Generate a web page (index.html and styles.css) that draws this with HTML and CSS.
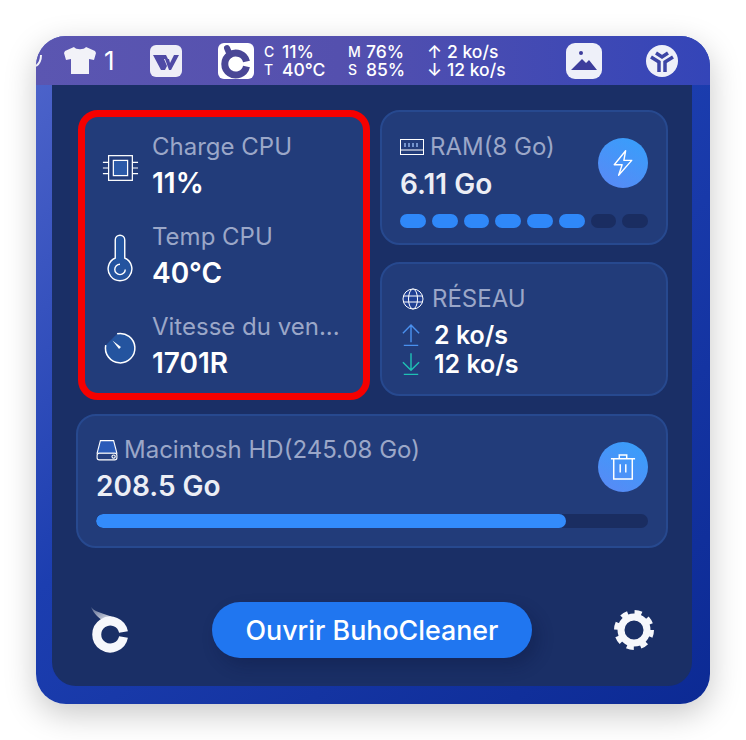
FILE: index.html
```html
<!DOCTYPE html>
<html lang="fr">
<head>
  <meta charset="UTF-8" />
  <meta name="viewport" content="width=device-width, initial-scale=1.0" />
  <title>BuhoCleaner</title>
  <link rel="stylesheet" href="styles.css">
</head>
<body>
  <div class="window">
    <div class="menubar">
      <svg class="menu-cut" viewBox="0 0 6 16" fill="none" stroke="#f2f2f8" stroke-width="2"><path d="M5 2 C5 7 3 11 0 13"/></svg>
      <svg class="menu-shirt" viewBox="0 0 32 28"><path d="M10 0 L1 4 L0 6 L2 13 L7 12 L7 27 L25 27 L25 12 L30 13 L32 6 L31 4 L22 0 C20 3 12 3 10 0 Z" fill="#f2f2f8"/></svg>
      <span class="menu-one">1</span>
      <div class="menu-wps">
        <svg viewBox="0 0 32 32" fill="#4f4aa6"><path d="M3 10 L16 10 L18 14 L14 14 L17 21 L15 25 L11 25 Z"/><path d="M15 14 L19 14 L20 18 L24 10 L29 10 L21 25 L19 25 Z"/></svg>
      </div>
      <div class="menu-buho">
        <svg viewBox="0 0 36 36" fill="none" stroke="#4a4796"><path d="M28.500 18.500 A11 11 0 1 0 28.500 23.500" stroke-width="7"/><path d="M9 5 L12 12" stroke-width="6" stroke-linecap="round"/></svg>
      </div>
      <div class="menu-stat menu-cpu">
        <div class="menu-line"><span class="menu-key">C</span><span>11%</span></div>
        <div class="menu-line"><span class="menu-key">T</span><span>40°C</span></div>
      </div>
      <div class="menu-stat menu-mem">
        <div class="menu-line"><span class="menu-key">M</span><span>76%</span></div>
        <div class="menu-line"><span class="menu-key">S</span><span>85%</span></div>
      </div>
      <div class="menu-stat menu-net">
        <div class="menu-line"><span class="menu-arrow">↑</span><span>2 ko/s</span></div>
        <div class="menu-line"><span class="menu-arrow">↓</span><span>12 ko/s</span></div>
      </div>
      <div class="menu-photo">
        <svg viewBox="0 0 36 36"><circle cx="15" cy="10" r="2" fill="#3d3d9c"/><path d="M5 27 L16 16 L20 20 L23 17 L31 27 Z" fill="#3d3d9c"/></svg>
      </div>
      <div class="menu-round">
        <svg viewBox="0 0 32 32" fill="none" stroke="#3c45a6" stroke-width="3.500"><path d="M5 12 L13 17 L13 27"/><path d="M27 12 L19 17 L19 27"/><path d="M10 8 L16 12 L22 8"/></svg>
      </div>
    </div>

    <div class="panel">
      <div class="grid">
        <div class="card cpu">
          <div class="cpu-row">
            <svg class="cpu-icon" viewBox="0 0 40 40" fill="none" stroke="#fff" stroke-width="1.300">
              <rect x="8" y="7" width="25" height="26"/>
              <rect x="13" y="12" width="15" height="16" fill="#2c5aa8"/>
              <path d="M2 14H8M2 20H8M2 26H8M33 14H39M33 20H39M33 26H39"/>
            </svg>
            <div>
              <div class="label">Charge CPU</div>
              <div class="value">11%</div>
            </div>
          </div>
          <div class="cpu-row">
            <svg class="cpu-icon" viewBox="0 0 40 52" fill="none" stroke="#fff" stroke-width="1.500">
              <path d="M15 26 V7 A5 5 0 0 1 25 7 V26 A12.500 12.500 0 1 1 15 26 Z" fill="#24549f"/>
              <path d="M25.500 38 A5.500 5.500 0 1 1 20 32.500"/>
            </svg>
            <div>
              <div class="label">Temp CPU</div>
              <div class="value">40°C</div>
            </div>
          </div>
          <div class="cpu-row">
            <svg class="cpu-icon" viewBox="0 0 40 40" fill="none" stroke="#fff" stroke-width="1.600">
              <path d="M17 5 A15.500 15.500 0 1 1 5 17" fill="#24549f"/>
              <path d="M12 12 L21 19 L19 21 Z" fill="#fff" stroke="none"/>
            </svg>
            <div>
              <div class="label">Vitesse du ven...</div>
              <div class="value">1701R</div>
            </div>
          </div>
        </div>

        <div class="card ram">
          <div>
            <div class="label-row">
              <svg class="ram-icon" viewBox="0 0 24 16" fill="none" stroke="#fff"><rect x="0.500" y="0.500" width="23" height="15"/><path d="M0.500 11H23.500"/><path d="M5 4V8M9 4V8M13 4V8M17 4V8" stroke="#8fb0e8" stroke-width="1.500"/></svg>
              <span class="label">RAM(8 Go)</span>
            </div>
            <div class="value soft">6.11 Go</div>
          </div>
          <div class="action">
            <svg viewBox="0 0 28 32" fill="none" stroke="#fff" stroke-width="1.600" stroke-linejoin="round"><path d="M17 2 L4 18 L13 18 L9 30 L24 13 L15 13 Z"/></svg>
          </div>
          <div class="pills">
            <span class="pill on"></span><span class="pill on"></span><span class="pill on"></span><span class="pill on"></span><span class="pill on"></span><span class="pill on"></span><span class="pill"></span><span class="pill"></span>
          </div>
        </div>

        <div class="card net">
          <div class="label-row net-label">
            <svg class="globe" viewBox="0 0 22 22" fill="#1f3f94" stroke="#fff" stroke-width="1"><circle cx="11" cy="11" r="10"/><ellipse cx="11" cy="11" rx="4.500" ry="10"/><path d="M1.500 8H20.500M1.500 14H20.500"/></svg>
            <span class="label">RÉSEAU</span>
          </div>
          <div class="net-rows">
            <div class="net-row">
              <svg class="net-icon" viewBox="0 0 20 26" fill="none" stroke="#4a90ee" stroke-width="1.600"><path d="M1 11 L10 2 L19 11M10 2V21M2 24.500H18"/></svg>
              <span class="net-value">2 ko/s</span>
            </div>
            <div class="net-row">
              <svg class="net-icon" viewBox="0 0 20 26" fill="none" stroke="#1fc0b4" stroke-width="1.600"><path d="M1 11 L10 20 L19 11M10 1V20M2 24.500H18"/></svg>
              <span class="net-value">12 ko/s</span>
            </div>
          </div>
        </div>
      </div>

      <div class="card disk">
        <div>
          <div class="label-row disk-label">
            <svg class="disk-icon" viewBox="0 0 20 20" stroke="#fff" stroke-width="1"><path d="M4 1.500H16L19 13H1Z" fill="#2a5bb8"/><rect x="1" y="13" width="18" height="6" rx="2" fill="#24407f"/><circle cx="16" cy="16" r="1.500" fill="none"/></svg>
            <span class="label">Macintosh HD(245.08 Go)</span>
          </div>
          <div class="value soft">208.5 Go</div>
        </div>
        <div class="action">
          <svg viewBox="0 0 28 30" fill="none" stroke="#fff" stroke-width="1.600"><path d="M1 6H27M10 6V2H18V6M4 6V28H24V6M11 12V21M17 12V21"/></svg>
        </div>
        <div class="bar"><div class="bar-fill" style="width: 85.1%"></div></div>
      </div>

      <div class="footer">
        <svg class="logo" viewBox="0 0 40 46">
          <defs>
            <linearGradient id="wing" x1="0" y1="0" x2="1" y2="1">
              <stop offset="0" stop-color="#fff" stop-opacity="0.25"/>
              <stop offset="1" stop-color="#fff"/>
            </linearGradient>
          </defs>
          <path d="M1 0 C6 7 18 6 27 13 L16 15 C9 12 4 7 1 0 Z" fill="url(#wing)"/>
          <path d="M33.500 25 A13.500 13.500 0 1 0 33.500 30" fill="none" stroke="#f6f7fb" stroke-width="9"/>
        </svg>
        <button class="open-btn">Ouvrir BuhoCleaner</button>
        <svg class="gear" viewBox="0 0 40 40" fill="none" stroke="#f6f7fb">
          <circle cx="20" cy="20" r="13" stroke-width="7"/>
          <circle cx="20" cy="20" r="17.500" stroke-width="5" stroke-dasharray="7 6.750"/>
        </svg>
      </div>
    </div>
  </div>
</body>
</html>
```

FILE: styles.css
```css
* {
  box-sizing: border-box;
  margin: 0;
  padding: 0;
}

body {
  background: #fff;
  font-family: "Inter", "Liberation Sans", sans-serif;
  height: 740px;
  overflow: hidden;
  padding: 36px;
}

.window {
  width: 674px;
  height: 668px;
  border-radius: 30px;
  background: linear-gradient(140deg, #5066cc 0%, #1c3eb0 45%, #0c2a94 100%);
  box-shadow: 0 10px 32px rgba(0, 0, 0, 0.22);
  overflow: hidden;
}

/* menu bar */
.menubar {
  display: flex;
  align-items: center;
  height: 49px;
  background: linear-gradient(90deg, #5b56b1 0%, #5450ae 45%, #3445b8 100%);
  color: #fff;
  font-size: 17.500px;
  font-weight: 500;
}

.menu-cut {
  width: 6px;
  height: 16px;
}

.menu-shirt {
  width: 32px;
  height: 28px;
  margin-left: 22px;
}

.menu-one {
  font-size: 26px;
  font-weight: 400;
  margin-left: 8px;
  width: 11px;
}

.menu-wps {
  width: 32px;
  height: 32px;
  margin-left: 35px;
  background: #eeeef7;
  border-radius: 6px;
}

.menu-buho {
  width: 36px;
  height: 36px;
  margin-left: 36px;
  background: #fff;
  border-radius: 6px;
}

.menu-stat {
  line-height: 18px;
}

.menu-line {
  display: flex;
  align-items: center;
}

.menu-cpu {
  margin-left: 10px;
  width: 84px;
}

.menu-mem {
  width: 79px;
}

.menu-net {
  width: 139px;
}

.menu-key {
  font-size: 14px;
  width: 18px;
}

.menu-arrow {
  width: 20px;
}

.menu-photo {
  width: 36px;
  height: 36px;
  background: #eef0f9;
  border-radius: 9px;
}

.menu-round {
  width: 32px;
  height: 32px;
  margin-left: 44px;
  background: #eef0f9;
  border-radius: 50%;
}

/* main panel */
.panel {
  height: 601px;
  margin: 0 18px 0 16px;
  background: #1a2f66;
  border-radius: 0 0 24px 24px;
  padding: 25px 24px 0 26px;
}

.grid {
  display: grid;
  grid-template-columns: 292px 288px;
  grid-template-rows: 135px 134px;
  column-gap: 10px;
  row-gap: 17px;
}

.card {
  background: #223c7a;
  border: 2px solid #27498f;
  border-radius: 20px;
}

.cpu {
  grid-row: span 2;
  height: 290px;
  border: 7px solid #f50000;
  padding: 11px 0 5px 16px;
  display: flex;
  flex-direction: column;
  justify-content: space-between;
}

.cpu-row {
  display: flex;
  align-items: center;
  height: 80px;
}

.cpu-icon {
  width: 38px;
  height: 50px;
  margin-right: 13px;
  flex-shrink: 0;
}

.label {
  color: #9ba7c8;
  font-size: 24px;
  line-height: 30px;
}

.value {
  color: #fff;
  font-size: 28px;
  font-weight: 600;
  line-height: 42px;
}

.value.soft {
  color: #eceef5;
}

.label-row {
  display: flex;
  align-items: center;
  gap: 6px;
}

.ram {
  padding: 20px 18px 0 18px;
  display: flex;
  flex-wrap: wrap;
  align-content: flex-start;
  justify-content: space-between;
}

.ram .value {
  margin-top: 1px;
}

.ram .action {
  margin-top: 6px;
}

.ram-icon {
  width: 24px;
  height: 16px;
}

.action {
  width: 50px;
  height: 50px;
  margin-top: 7px;
  border-radius: 50%;
  background: linear-gradient(30deg, #5b88f5, #35a0fb);
  display: flex;
  align-items: center;
  justify-content: center;
}

.action svg {
  width: 26px;
  height: 28px;
}

.pills {
  display: flex;
  gap: 6px;
  width: 100%;
  margin-top: 9px;
}

.pill {
  flex: 1;
  height: 14px;
  border-radius: 7px;
  background: #1a2d61;
}

.pill.on {
  background: #2f88f9;
}

.net {
  padding: 20px 18px 0 20px;
}

.net-label {
  gap: 8px;
}

.globe {
  width: 22px;
  height: 22px;
}

.net-rows {
  margin-top: 6px;
}

.net-row {
  display: flex;
  align-items: center;
  gap: 14px;
  height: 29px;
}

.net-icon {
  width: 18px;
  height: 26px;
}

.net-value {
  color: #fff;
  font-size: 25px;
  font-weight: 600;
}

.disk {
  width: 592px;
  height: 134px;
  margin-top: 18px;
  margin-left: -2px;
  padding: 19px 18px 0 18px;
  display: flex;
  flex-wrap: wrap;
  align-content: flex-start;
  justify-content: space-between;
}

.disk-icon {
  width: 22px;
  height: 22px;
}

.bar {
  width: 100%;
  height: 14px;
  margin-top: 7px;
  background: #1a2d61;
  border-radius: 7px;
  overflow: hidden;
}

.bar-fill {
  height: 100%;
  background: #338bfb;
  border-radius: 7px;
}

/* footer */
.footer {
  display: flex;
  align-items: center;
  justify-content: space-between;
  margin-top: 54px;
  padding: 0 14px 0 12px;
}

.logo {
  width: 40px;
  height: 46px;
}

.open-btn {
  width: 320px;
  height: 56px;
  border: none;
  border-radius: 28px;
  background: #2076f0;
  box-shadow: 6px 8px 16px rgba(10, 20, 60, 0.3);
  color: #fff;
  font-family: inherit;
  font-size: 26.800px;
  font-weight: 500;
}

.gear {
  width: 40px;
  height: 40px;
}
```
